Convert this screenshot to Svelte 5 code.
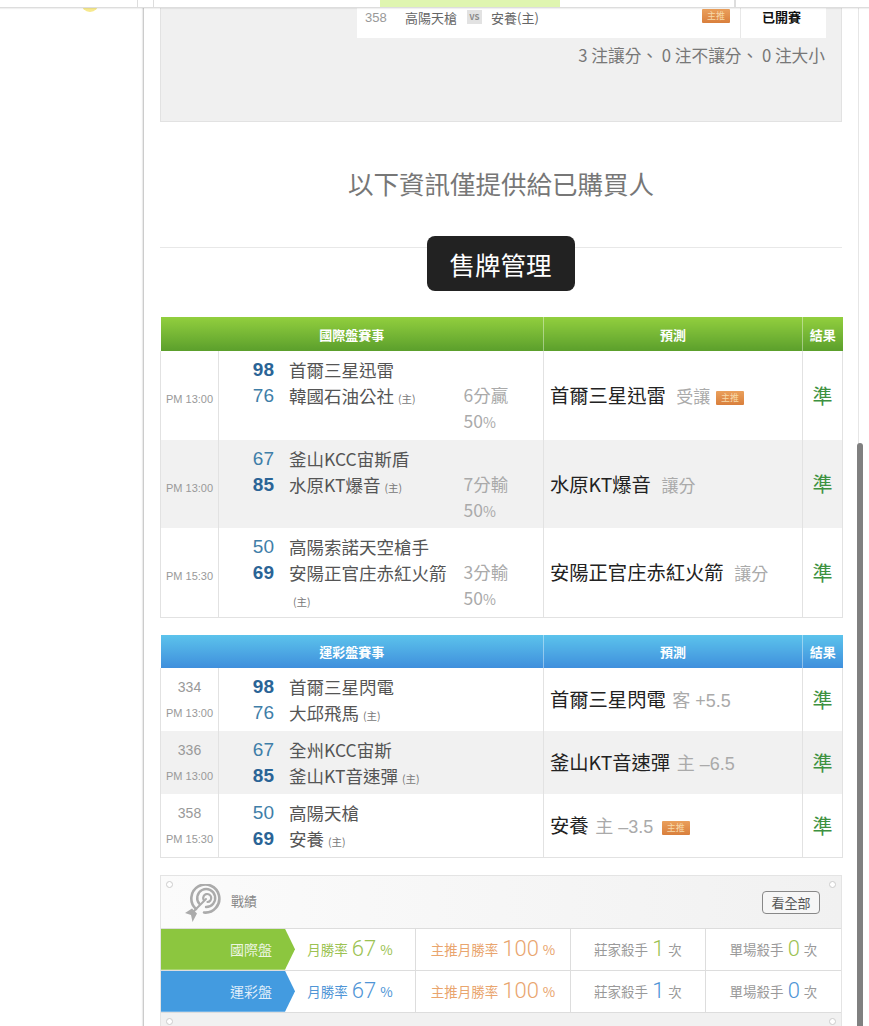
<script>
  const intl = [
    { time: "PM 13:00", bg: false, teams: [{ score: 98, win: true, name: "首爾三星迅雷" }, { score: 76, name: "韓國石油公社", home: true }], spread: "6分贏", pick: "首爾三星迅雷", note: "受讓", badge: true },
    { time: "PM 13:00", bg: true, teams: [{ score: 67, name: "釜山KCC宙斯盾" }, { score: 85, win: true, name: "水原KT爆音", home: true }], spread: "7分輸", pick: "水原KT爆音", note: "讓分" },
    { time: "PM 15:30", bg: false, teams: [{ score: 50, name: "高陽索諾天空槍手" }, { score: 69, win: true, name: "安陽正官庄赤紅火箭", home: true }], spread: "3分輸", pick: "安陽正官庄赤紅火箭", note: "讓分" },
  ];

  const sport = [
    { no: 334, time: "PM 13:00", bg: false, teams: [{ score: 98, win: true, name: "首爾三星閃電" }, { score: 76, name: "大邱飛馬", home: true }], pick: "首爾三星閃電", note: "客 +5.5" },
    { no: 336, time: "PM 13:00", bg: true, teams: [{ score: 67, name: "全州KCC宙斯" }, { score: 85, win: true, name: "釜山KT音速彈", home: true }], pick: "釜山KT音速彈", note: "主 –6.5" },
    { no: 358, time: "PM 15:30", bg: false, teams: [{ score: 50, name: "高陽天槍" }, { score: 69, win: true, name: "安養", home: true }], pick: "安養", note: "主 –3.5", badge: true },
  ];

  const stats = [
    { label: "國際盤", cls: "green" },
    { label: "運彩盤", cls: "blue" },
  ];
</script>

{#snippet teamLines(teams)}
  {#each teams as t}
    <div class="line">
      <span class="score" class:win={t.win}>{t.score}</span>
      <span class="name">{t.name}{#if t.home} <small>(主)</small>{/if}</span>
    </div>
  {/each}
{/snippet}

{#snippet pickCell(r)}
  <td class="pick">
    <b>{r.pick}</b> <span class="note">{r.note}</span>
    {#if r.badge}<span class="badge">主推</span>{/if}
  </td>
  <td class="res">準</td>
{/snippet}

<div class="page">
  <div class="topbar">
    <div class="tb a"></div>
    <div class="tb b"></div>
    <div class="tb hl"></div>
    <div class="tb c"></div>
    <div class="tb d"></div>
  </div>
  <div class="sun"></div>
  <div class="thumb"></div>

  <main>
    <section class="graybox">
      <div class="slip">
        <span class="no">358</span>
        <span class="t1">高陽天槍</span>
        <span class="vs">VS</span>
        <span class="t2">安養(主)</span>
        <span class="badge">主推</span>
        <span class="state">已開賽</span>
      </div>
      <p class="sum">3 注讓分、 0 注不讓分、 0 注大小</p>
    </section>

    <h2>以下資訊僅提供給已購買人</h2>

    <div class="divider"><button>售牌管理</button></div>

    <table class="tbl green intl">
      <colgroup><col class="c1" /><col class="c2" /><col class="c3" /><col class="c4" /><col class="c5" /></colgroup>
      <thead>
        <tr><th colspan="3">國際盤賽事</th><th>預測</th><th>結果</th></tr>
      </thead>
      <tbody>
        {#each intl as r}
          <tr class:alt={r.bg}>
            <td class="time"><span>{r.time}</span></td>
            <td class="teams">{@render teamLines(r.teams)}</td>
            <td class="spread"><br />{r.spread}<br />50<small>%</small></td>
            {@render pickCell(r)}
          </tr>
        {/each}
      </tbody>
    </table>

    <table class="tbl blue sport">
      <colgroup><col class="c1" /><col class="c2" /><col class="c3" /><col class="c4" /><col class="c5" /></colgroup>
      <thead>
        <tr><th colspan="3">運彩盤賽事</th><th>預測</th><th>結果</th></tr>
      </thead>
      <tbody>
        {#each sport as r}
          <tr class:alt={r.bg}>
            <td class="time stack"><em>{r.no}</em><span>{r.time}</span></td>
            <td class="teams" colspan="2">{@render teamLines(r.teams)}</td>
            {@render pickCell(r)}
          </tr>
        {/each}
      </tbody>
    </table>

    <section class="record">
      <header>
        <i class="rivet"></i>
        <svg class="target" viewBox="0 0 40 40" width="40" height="40" fill="none" stroke="#ababab" stroke-linecap="round">
          <path d="M12 25A14 14 0 1 1 20 28.5" stroke-width="2.6" />
          <path d="M15.5 20A9 9 0 1 1 22 23" stroke-width="2.4" />
          <path d="M19.5 15.5A4 4 0 1 1 23.5 18" stroke-width="2.2" />
          <path d="M22 15L9 28" stroke-width="2" />
          <path d="M1 29L8 24.5L13 29.5L8.500 38L7 31Z" fill="#ababab" stroke="none" />
        </svg>
        <span class="title">戰績</span>
        <button class="all">看全部</button>
        <i class="rivet"></i>
      </header>
      {#each stats as s}
        <div class="row {s.cls}">
          <div class="label">{s.label}</div>
          <div class="cell"><span class="tone">月勝率 <b>67</b> %</span></div>
          <div class="cell hot">主推月勝率 <b>100</b> %</div>
          <div class="cell">莊家殺手 <b class="tone">1</b> 次</div>
          <div class="cell">單場殺手 <b class="tone">0</b> 次</div>
        </div>
      {/each}
      <footer><i class="rivet"></i><i class="rivet"></i></footer>
    </section>
  </main>
</div>

<style>
  :global(body) {
    margin: 0;
    background: #fff;
  }

  .page {
    position: relative;
    width: 869px;
    height: 1026px;
    overflow: hidden;
    font-family: "Noto Sans CJK TC", "Liberation Sans", sans-serif;
    color: #333;
  }

  .topbar {
    position: absolute;
    z-index: 3;
    top: 0;
    left: 0;
    right: 0;
    height: 7px;
    display: flex;
    background: #fff;
    border-bottom: 1px solid #ddd;
    box-shadow: 0 1px 1px rgba(0, 0, 0, 0.06);
  }

  .tb {
    box-sizing: border-box;
    border-right: 1px solid #ddd;
  }

  .tb.a { width: 138px; }
  .tb.b { width: 16px; }
  .tb.hl { width: 180px; margin-left: 226px; background: #dff5b0; border: 0; }
  .tb.c { width: 175px; }

  .sun {
    position: absolute;
    left: 81px;
    top: -6px;
    width: 18px;
    height: 18px;
    border-radius: 50%;
    background: #f7e98e;
  }

  .thumb {
    position: absolute;
    z-index: 2;
    left: 857px;
    top: 443px;
    width: 6px;
    height: 600px;
    border-radius: 3px 3px 0 0;
    background: #808080;
  }

  main {
    box-sizing: border-box;
    width: 716px;
    height: 1026px;
    margin-left: 143px;
    padding: 0 16px;
    border-left: 1px solid #ccc;
    border-right: 1px solid #e6e6e6;
    box-shadow: -1px 0 1px rgba(0, 0, 0, 0.08);
  }

  .graybox {
    box-sizing: border-box;
    width: 682px;
    height: 122px;
    padding-right: 16px;
    background: #f0f0f0;
    border: 1px solid #e2e2e2;
    border-top: 0;
  }

  .slip {
    box-sizing: border-box;
    display: flex;
    align-items: center;
    width: 469px;
    height: 38px;
    margin-left: 196px;
    padding: 0 0 4px 8px;
    background: #fff;
    font-size: 13px;
    color: #666;
  }

  .no { width: 40px; color: #999; font-family: "Liberation Sans", sans-serif; }
  .t1 { width: 62px; }

  .vs {
    width: 15px;
    height: 14px;
    margin-right: 9px;
    background: #e2e2e2;
    color: #888;
    font-size: 8px;
    font-weight: bold;
    line-height: 14px;
    text-align: center;
  }

  .t2 { width: 211px; }

  .slip .badge { margin: 0 10px 2px 0; }

  .state {
    flex: 1;
    align-self: stretch;
    margin-bottom: -4px;
    padding: 7px 4px 0 0;
    border-left: 1px solid #e8e8e8;
    color: #111;
    font-weight: bold;
    line-height: 20px;
    text-align: center;
  }

  .sum {
    margin: 6px 0 0;
    font-size: 16.7px;
    line-height: 22px;
    color: #777;
    text-align: right;
  }

  h2 {
    margin: 43px 0 35px;
    font-size: 25.5px;
    font-weight: 400;
    line-height: 36px;
    color: #777;
    text-align: center;
  }

  .divider {
    display: flex;
    justify-content: center;
    width: 682px;
    background: linear-gradient(#e8e8e8, #e8e8e8) 0 11px / 100% 1px no-repeat;
  }

  .divider button {
    width: 148px;
    height: 55px;
    margin-left: -1px;
    border: 0;
    border-radius: 8px;
    background: #222;
    color: #fff;
    font: inherit;
    font-size: 25.5px;
  }

  .tbl {
    width: 682px;
    table-layout: fixed;
    border-collapse: collapse;
    color: #333;
  }

  .intl { margin-top: 26px; }
  .sport { margin-top: 17px; }

  .c1 { width: 58px; }
  .c2 { width: 245px; }
  .c3 { width: 80px; }
  .c4 { width: 259px; }
  .c5 { width: 40px; }

  th {
    height: 34px;
    padding: 0;
    border-left: 1px solid rgba(255, 255, 255, 0.4);
    color: #fff;
    font-size: 13px;
    font-weight: bold;
  }

  .sport th { height: 33px; }

  th:first-child { border-left: 0; }

  .green th { background: linear-gradient(#92cf3e, #5b9f2c); }
  .blue th { background: linear-gradient(#5cc3ec, #3f8fdc); }

  td {
    padding: 0;
    border: 1px solid #e2e2e2;
    border-width: 0 1px;
    vertical-align: middle;
  }

  tbody tr:last-child td { border-bottom: 1px solid #e2e2e2; }

  .alt td { background: #f1f1f1; }

  .time {
    padding-top: 8px;
    color: #999;
    font-family: "Liberation Sans", sans-serif;
    font-size: 11px;
    text-align: center;
  }

  .stack em {
    display: block;
    font-size: 14px;
    font-style: normal;
    line-height: 26px;
  }

  .stack span {
    display: block;
    line-height: 26px;
  }

  .time.stack { padding: 6px 0 5px; }

  .teams {
    padding: 6px 0 4.6px;
    border-right: 0;
    vertical-align: top;
  }

  .line {
    display: flex;
    line-height: 26px;
    font-size: 17.5px;
    color: #555;
  }

  .score {
    flex: none;
    width: 55px;
    height: 26px;
    margin-right: 15px;
    font-family: "Liberation Sans", sans-serif;
    font-size: 19px;
    color: #3f7ea8;
    text-align: right;
  }

  .score.win {
    color: #2a6496;
    font-weight: bold;
  }

  .name small {
    margin-left: 4px;
    font-size: 10.5px;
    line-height: 1;
    color: #777;
  }

  .intl .name { width: 174px; }

  .spread {
    padding: 5px 0 5.6px;
    border-left: 0;
    font-size: 17.5px;
    line-height: 26px;
    color: #aaa;
    vertical-align: top;
  }

  .spread small {
    font-size: 14px;
    line-height: 1;
  }

  .pick {
    padding-left: 6px;
    white-space: nowrap;
  }

  .pick b {
    font-size: 19.3px;
    font-weight: 400;
    line-height: 26px;
    color: #222;
  }

  .note {
    margin-left: 3px;
    font-family: "Liberation Sans", "Noto Sans CJK TC", sans-serif;
    font-size: 18px;
    line-height: 1;
    color: #aaa;
  }

  .intl .note {
    margin-left: 7px;
    font-size: 17px;
  }

  .badge {
    display: inline-block;
    width: 28px;
    height: 14px;
    margin-left: 2px;
    border-radius: 1px;
    background: linear-gradient(#eaa05c, #d97f3c);
    color: #f7d9a8;
    font-size: 9px;
    line-height: 14px;
    text-align: center;
    vertical-align: 2px;
  }

  .sport .badge { margin-left: 5px; }

  .res {
    color: #3d9140;
    font-size: 20px;
    text-align: center;
  }

  .record {
    width: 682px;
    margin-top: 17px;
    box-sizing: border-box;
    border: 1px solid #e4e4e4;
    background: #f1f1f1;
  }

  .record header {
    display: flex;
    align-items: flex-start;
    height: 52px;
    background: linear-gradient(90deg, #fbfbfb, #f1f1f1);
  }

  .rivet {
    flex: none;
    box-sizing: border-box;
    width: 7px;
    height: 7px;
    margin: 5px 5px 0;
    border: 1px solid #ccc;
    border-radius: 50%;
    background: #fff;
  }

  .target { margin: 8px 0 0 6px; }

  .title {
    margin: 15px 0 0 7px;
    color: #888;
    font-size: 13px;
    line-height: 20px;
  }

  .all {
    width: 58px;
    height: 23px;
    margin: 15px 4px 0 auto;
    padding: 0;
    border: 1px solid #888;
    border-radius: 4px;
    background: #f6f6f6;
    color: #555;
    font: inherit;
    font-size: 13px;
  }

  .row {
    display: grid;
    grid-template-columns: 124px 131px 155px 135px 135px;
    height: 41px;
    background: #fff;
    border-top: 1px solid #ddd;
  }

  .row:last-of-type { border-bottom: 1px solid #ddd; }

  .label {
    position: relative;
    z-index: 1;
    margin-right: -10px;
    padding-right: 23px;
    color: rgba(255, 255, 255, 0.85);
    font-size: 14px;
    line-height: 41px;
    text-align: right;
    clip-path: polygon(0 0, calc(100% - 10px) 0, 100% 50%, calc(100% - 10px) 100%, 0 100%);
  }

  .green .label { background: #8cc63f; }
  .blue .label { background: #439be0; }

  .cell {
    border-right: 1px solid #ddd;
    color: #999;
    font-size: 13.5px;
    line-height: 41px;
    text-align: center;
    white-space: nowrap;
  }

  .cell:last-child { border-right: 0; }

  .cell b {
    margin: 0 1px;
    font-family: Roboto, "Liberation Sans", sans-serif;
    font-size: 22px;
    font-weight: 300;
    line-height: 1;
    vertical-align: -1px;
  }

  .green .tone { color: #9cc252; }
  .blue .tone { color: #4f95d6; }

  .hot { color: #e9a56e; }

  .record footer {
    display: flex;
    justify-content: space-between;
    height: 13px;
  }
</style>
